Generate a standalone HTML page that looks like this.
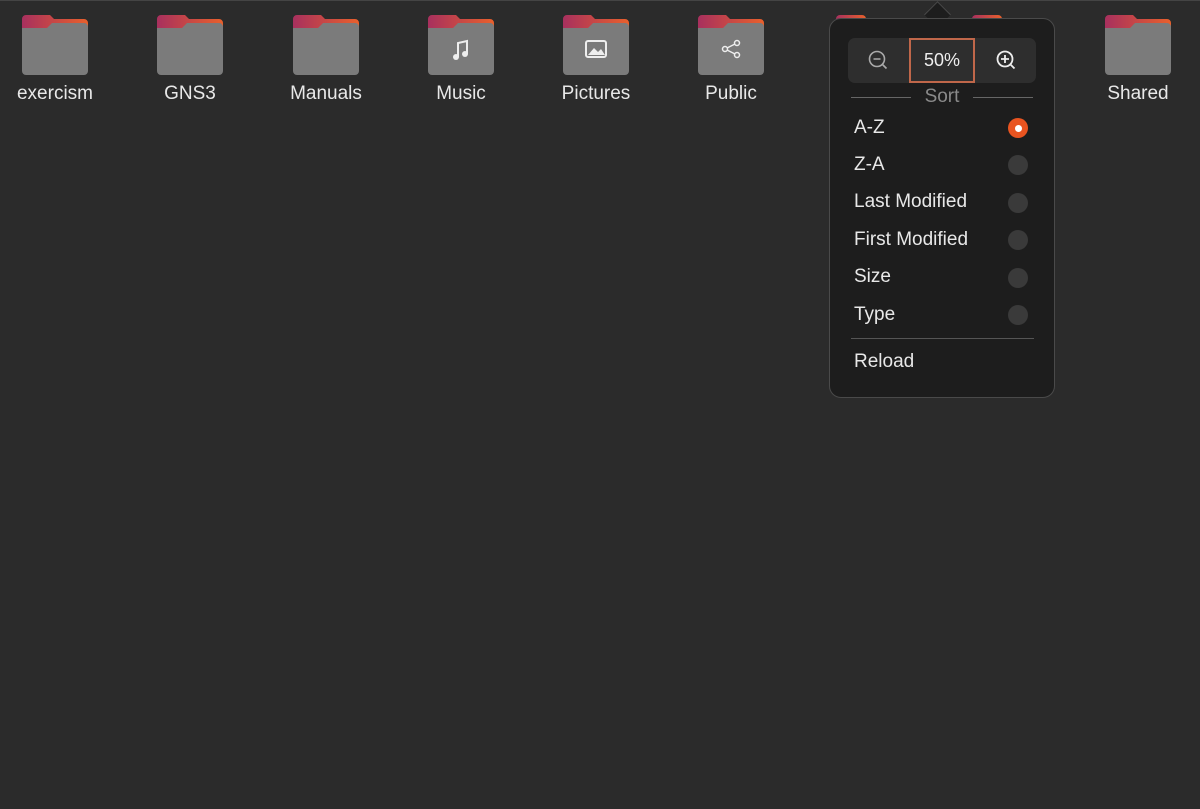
<!DOCTYPE html>
<html><head><style>
body{margin:0;width:1200px;height:809px;background:#2b2b2b;overflow:hidden;position:relative;font-family:"Liberation Sans",sans-serif;color:#eee}
.top{position:absolute;left:0;top:0;width:1200px;height:1px;background:#444}
.f{position:absolute;top:14px;width:130px;text-align:center}
.f svg{display:block;margin:0 auto}
.f div{font-size:19px;margin-top:7px;color:#e8e8e8}
.pop{position:absolute;left:829px;top:18px;width:224px;height:378px;background:#1d1d1d;border:1px solid #4a4a4a;border-radius:12px}
.arrow{position:absolute;left:928px;top:5px;width:18px;height:18px;background:#1d1d1d;border-left:1px solid #4a4a4a;border-top:1px solid #4a4a4a;transform:rotate(45deg)}
.zoom{position:absolute;left:18px;top:19px;width:188px;height:45px;background:#2e2e2e;border-radius:7px}
.pct{position:absolute;left:61px;top:0;width:62px;height:41px;border:2px solid #c0674a;font-size:18px;text-align:center;line-height:41px;color:#eee}
.item{position:absolute;left:24px;font-size:19px;color:#e8e8e8}
.r{position:absolute;left:178px;width:20px;height:20px;border-radius:50%;background:#3a3a3a}
</style></head><body>
<div class="top"></div>
<svg width="0" height="0" style="position:absolute"><defs>
<linearGradient id="g" x1="0" x2="1"><stop offset="0" stop-color="#a8305e"/><stop offset="1" stop-color="#e8602c"/></linearGradient></defs></svg>
<div class="f" style="left:-10px"><svg width="68" height="62"><path d="M5 1h24l4 4h30a4 4 0 0 1 4 4v20H1V5a4 4 0 0 1 4-4z" fill="url(#g)"/><path d="M1 14h25l5-5h32a4 4 0 0 1 4 4v44a4 4 0 0 1-4 4H5a4 4 0 0 1-4-4z" fill="#7b7b7b"/></svg><div>exercism</div></div>
<div class="f" style="left:125px"><svg width="68" height="62"><path d="M5 1h24l4 4h30a4 4 0 0 1 4 4v20H1V5a4 4 0 0 1 4-4z" fill="url(#g)"/><path d="M1 14h25l5-5h32a4 4 0 0 1 4 4v44a4 4 0 0 1-4 4H5a4 4 0 0 1-4-4z" fill="#7b7b7b"/></svg><div>GNS3</div></div>
<div class="f" style="left:261px"><svg width="68" height="62"><path d="M5 1h24l4 4h30a4 4 0 0 1 4 4v20H1V5a4 4 0 0 1 4-4z" fill="url(#g)"/><path d="M1 14h25l5-5h32a4 4 0 0 1 4 4v44a4 4 0 0 1-4 4H5a4 4 0 0 1-4-4z" fill="#7b7b7b"/></svg><div>Manuals</div></div>
<div class="f" style="left:396px"><svg width="68" height="62"><path d="M5 1h24l4 4h30a4 4 0 0 1 4 4v20H1V5a4 4 0 0 1 4-4z" fill="url(#g)"/><path d="M1 14h25l5-5h32a4 4 0 0 1 4 4v44a4 4 0 0 1-4 4H5a4 4 0 0 1-4-4z" fill="#7b7b7b"/><path d="M31 43V29l9-2v13" stroke="#eee" stroke-width="2" fill="none"/><circle cx="29" cy="43" r="3" fill="#eee"/><circle cx="38" cy="40" r="3" fill="#eee"/></svg><div>Music</div></div>
<div class="f" style="left:531px"><svg width="68" height="62"><path d="M5 1h24l4 4h30a4 4 0 0 1 4 4v20H1V5a4 4 0 0 1 4-4z" fill="url(#g)"/><path d="M1 14h25l5-5h32a4 4 0 0 1 4 4v44a4 4 0 0 1-4 4H5a4 4 0 0 1-4-4z" fill="#7b7b7b"/><rect x="24" y="27" width="20" height="16" rx="2" stroke="#eee" stroke-width="2" fill="none"/><path d="M26 41l6-7 4 4 3-3 4 6z" fill="#eee"/></svg><div>Pictures</div></div>
<div class="f" style="left:666px"><svg width="68" height="62"><path d="M5 1h24l4 4h30a4 4 0 0 1 4 4v20H1V5a4 4 0 0 1 4-4z" fill="url(#g)"/><path d="M1 14h25l5-5h32a4 4 0 0 1 4 4v44a4 4 0 0 1-4 4H5a4 4 0 0 1-4-4z" fill="#7b7b7b"/><circle cx="28" cy="35" r="2.5" stroke="#eee" fill="none" stroke-width="1.5"/><circle cx="40" cy="29" r="2.5" stroke="#eee" fill="none" stroke-width="1.5"/><circle cx="40" cy="41" r="2.5" stroke="#eee" fill="none" stroke-width="1.5"/><path d="M30 34l8-4M30 36l8 4" stroke="#eee" stroke-width="1.5"/></svg><div>Public</div></div>
<div class="f" style="left:1073px"><svg width="68" height="62"><path d="M5 1h24l4 4h30a4 4 0 0 1 4 4v20H1V5a4 4 0 0 1 4-4z" fill="url(#g)"/><path d="M1 14h25l5-5h32a4 4 0 0 1 4 4v44a4 4 0 0 1-4 4H5a4 4 0 0 1-4-4z" fill="#7b7b7b"/></svg><div>Shared</div></div>
<svg width="80" height="10" style="position:absolute;left:832px;top:14px"><path d="M4 10V5a4 4 0 0 1 4-4h22a4 4 0 0 1 4 4v5" fill="url(#g)"/></svg>
<svg width="80" height="10" style="position:absolute;left:968px;top:14px"><path d="M4 10V5a4 4 0 0 1 4-4h22a4 4 0 0 1 4 4v5" fill="url(#g)"/></svg>
<div class="arrow"></div>
<div class="pop">
<div class="zoom">
<svg width="24" height="24" style="position:absolute;left:19px;top:11px"><circle cx="10" cy="10" r="7.5" stroke="#aaa" stroke-width="1.6" fill="none"/><path d="M6.5 10h7M15.5 15.5l4 4" stroke="#aaa" stroke-width="1.6"/></svg>
<div class="pct">50%</div>
<svg width="24" height="24" style="position:absolute;left:147px;top:11px"><circle cx="10" cy="10" r="7.5" stroke="#eee" stroke-width="1.8" fill="none"/><path d="M6 10h8M10 6v8M15.5 15.5l4 4" stroke="#eee" stroke-width="1.8"/></svg>
</div>
<div style="position:absolute;left:21px;top:78px;width:60px;height:1px;background:#666"></div>
<div style="position:absolute;left:143px;top:78px;width:60px;height:1px;background:#666"></div>
<div style="position:absolute;left:0;width:224px;top:67px;text-align:center;font-size:19px;color:#8a8a8a">Sort</div>
<div class="item" style="top:98px">A-Z</div><div class="r" style="top:99px;background:#e95420"><div style="width:7px;height:7px;background:#fff;border-radius:50%;margin:6.5px"></div></div>
<div class="item" style="top:135px">Z-A</div><div class="r" style="top:136px"></div>
<div class="item" style="top:172px">Last Modified</div><div class="r" style="top:174px"></div>
<div class="item" style="top:210px">First Modified</div><div class="r" style="top:211px"></div>
<div class="item" style="top:247px">Size</div><div class="r" style="top:249px"></div>
<div class="item" style="top:285px">Type</div><div class="r" style="top:286px"></div>
<div style="position:absolute;left:21px;top:319px;width:183px;height:1px;background:#555"></div>
<div class="item" style="top:332px">Reload</div>
</div>
</body></html>
